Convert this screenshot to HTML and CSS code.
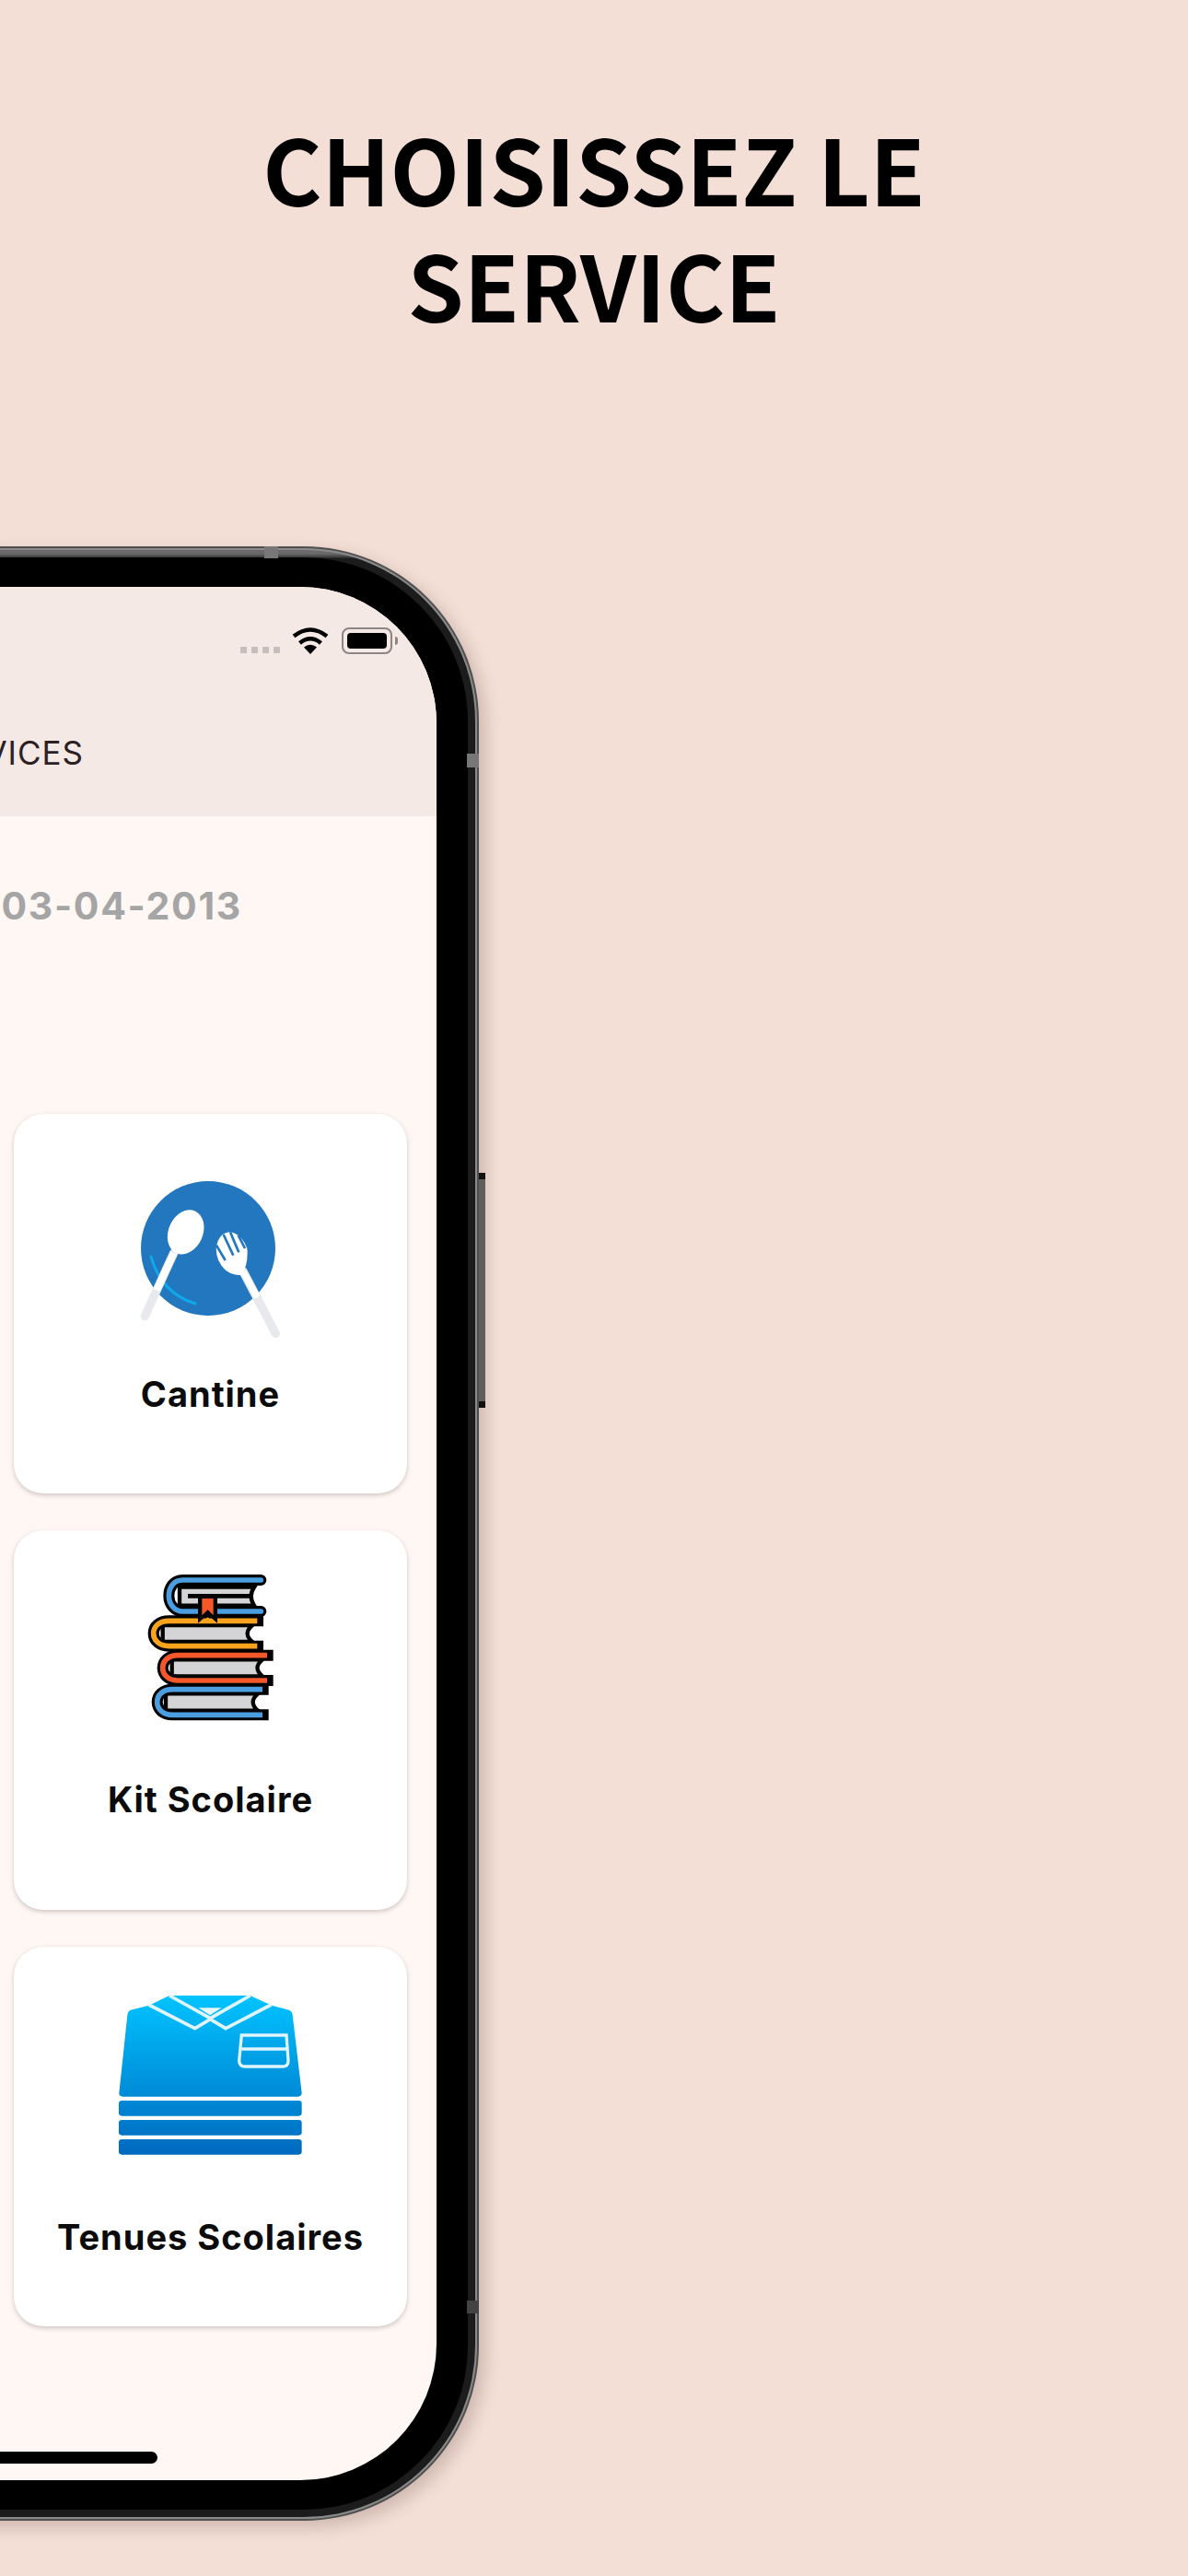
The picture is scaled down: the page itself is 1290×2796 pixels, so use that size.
FILE: index.html
```html
<!DOCTYPE html>
<html lang="fr">
<head>
<meta charset="utf-8">
<title>Choisissez le service</title>
<link rel="stylesheet" href="styles.css">
</head>
<body>
<main class="poster">
  <h1 class="title">CHOISISSEZ LE SERVICE</h1>
  <div class="phone">
    <span class="tab tab-top"></span>
    <span class="tab tab-right"></span>
    <span class="tab tab-right-low"></span>
    <span class="side-button"></span>
    <div class="ring-a"><div class="ring-b"><div class="bezel">
      <div class="screen">
        <header class="app-header">
          <div class="status">
            <span class="signal"><i></i><i></i><i></i><i></i></span>
            <svg class="wifi" viewBox="0 0 40 30" aria-hidden="true">
              <path d="M20 30 L13 22.500 Q20 17 27 22.500Z" fill="#000"/>
              <path d="M8.500 18 Q20 8.500 31.500 18" fill="none" stroke="#000" stroke-width="4.500"/>
              <path d="M2 10.500 Q20 -3.500 38 10.500" fill="none" stroke="#000" stroke-width="4.500"/>
            </svg>
            <span class="battery"><span class="battery-fill"></span></span>
            <span class="battery-cap"></span>
          </div>
          <div class="app-title">SERVICES</div>
        </header>
        <section class="content">
          <div class="date">03-04-2013</div>
          <div class="cards">
            <article class="card">
              <svg class="icon icon-cantine" viewBox="0 0 660 720" aria-hidden="true">
                <circle cx="318" cy="345" r="219" fill="#2277bf"/>
                <path d="M132 372 Q165 490 276 525" fill="none" stroke="#0fa8ea" stroke-width="9" stroke-linecap="round"/>
                <path d="M206 360 L112 566" stroke="#e8e9ec" stroke-width="28" stroke-linecap="round"/>
                <path d="M206 360 L150 482" stroke="#fff" stroke-width="22"/>
                <ellipse cx="245" cy="292" rx="56" ry="75" transform="rotate(24 245 292)" fill="#fff"/>
                <path d="M432 420 L538 622" stroke="#e8e9ec" stroke-width="28" stroke-linecap="round"/>
                <path d="M432 420 L478 505" stroke="#fff" stroke-width="20"/>
                <path d="M345 340 Q352 296 388 292 Q425 295 445 345 Q450 392 428 432 Q375 435 352 385 Q342 362 345 340Z" fill="#fff"/>
                <path d="M345 335 L374 384 M368 300 L400 368 M390 292 L418 358 M416 302 L438 345" stroke="#2277bf" stroke-width="8"/>
              </svg>
              <h2 class="label">Cantine</h2>
            </article>
            <article class="card">
              <svg class="icon icon-books" viewBox="0 0 570 600" aria-hidden="true">
                <path class="pages" d="M195 98 H438 Q418 127 438 158 H195Z"/>
                <path class="line" d="M222 127 H425"/>
                <path class="edge round" d="M460 75 H205 C175 75 160 100 160 127 C160 155 180 177 205 177 H460"/>
                <path class="cover blue round" d="M460 75 H205 C175 75 160 100 160 127 C160 155 180 177 205 177 H460"/>
                <path class="pages" d="M140 222 H432 Q400 249 432 276 H140Z"/>
                <path class="edge" d="M450 208 H160 C130 208 110 225 110 249 C110 272 130 290 160 290 H450"/>
                <path class="cover orange" d="M448 208 H160 C130 208 110 225 110 249 C110 272 130 290 160 290 H448"/>
                <path class="pages" d="M170 334 H465 Q432 361 465 388 H170Z"/>
                <path class="edge" d="M482 320 H190 C160 320 140 337 140 361 C140 385 160 402 190 402 H482"/>
                <path class="cover red" d="M480 320 H190 C160 320 140 337 140 361 C140 385 160 402 190 402 H480"/>
                <path class="pages" d="M150 445 H450 Q418 472 450 500 H150Z"/>
                <path class="edge" d="M467 431 H172 C142 431 122 448 122 472 C122 496 142 514 172 514 H467"/>
                <path class="cover blue" d="M465 431 H172 C142 431 122 448 122 472 C122 496 142 514 172 514 H465"/>
                <path d="M255 122 H318 V215 L287 188 L255 215Z" fill="#000"/>
                <path d="M268 135 H305 V190 L287 172 L268 190Z" fill="#f4572a"/>
                <path d="M275 207 L287 196 L299 207Z" fill="#fba31c"/>
              </svg>
              <h2 class="label">Kit Scolaire</h2>
            </article>
            <article class="card">
              <svg class="icon icon-shirt" viewBox="0 0 690 660" aria-hidden="true">
                <defs>
                  <linearGradient id="shirt" gradientUnits="userSpaceOnUse" x1="0" y1="80" x2="0" y2="600">
                    <stop offset="0" stop-color="#00c3ff"/>
                    <stop offset="1" stop-color="#0068bf"/>
                  </linearGradient>
                </defs>
                <path fill="url(#shirt)" d="M95 125 L155 110 L222 78 H485 L555 110 L612 125 Q622 130 623 142 L653 395 Q653 405 640 407 H70 Q57 405 58 395 L85 142 Q86 130 95 125Z"/>
                <path fill="#e7f7ff" d="M316 118 H392 L354 142Z"/>
                <path d="M155 108 L305 185 L355 155 L405 185 L553 108 M222 78 L355 152 L485 78" fill="none" stroke="#dff4ff" stroke-width="11"/>
                <path d="M457 207 H603 L609 290 Q609 309 590 309 H470 Q449 309 449 290Z M458 252 H602" fill="none" stroke="#dff4ff" stroke-width="10"/>
                <rect class="stripe" x="57" y="420" width="596" height="50" rx="10"/>
                <rect class="stripe" x="57" y="483" width="596" height="50" rx="10"/>
                <rect class="stripe" x="57" y="546" width="596" height="50" rx="10"/>
              </svg>
              <h2 class="label">Tenues Scolaires</h2>
            </article>
          </div>
          <div class="home-bar"></div>
        </section>
      </div>
    </div></div></div>
  </div>
</main>
</body>
</html>
```
FILE: styles.css
```css
html, body { margin: 0; padding: 0; }
body { width: 1290px; height: 2796px; overflow: hidden; background: #f4dfd6; }
.poster { width: 1290px; height: 2796px; display: flex; flex-direction: column; overflow: hidden; }
.title {
  margin: 0 auto;
  padding-top: 118px;
  width: 800px;
  height: 593px;
  box-sizing: border-box;
  text-align: center;
  font-family: "Noto Sans CJK SC", "Noto Sans", sans-serif;
  font-weight: 700;
  font-size: 98px;
  line-height: 126px;
  color: #000;
}
.phone {
  position: relative;
  flex: none;
  margin-left: -200px;
  width: 720px;
  height: 2143px;
  box-sizing: border-box;
  padding: 2px;
  border-radius: 190px;
  background: #4f4f4f;
  box-shadow: 7px 7px 18px rgba(70, 40, 30, .22);
}
.ring-a { height: 100%; box-sizing: border-box; padding: 2px; border-radius: 188px; background: #8a8a8a; }
.ring-b {
  height: 100%;
  box-sizing: border-box;
  padding: 8px;
  border-radius: 186px;
  background: linear-gradient(#6a6a6a 0, #6a6a6a 4px, #3a3a3a 8px, #1c1c1c 9px);
}
.bezel { height: 100%; box-sizing: border-box; padding: 32px 34px; border-radius: 178px; background: #000; }
.screen {
  height: 100%;
  display: flex;
  flex-direction: column;
  border-radius: 148px;
  overflow: hidden;
  background: #fef7f4;
  font-family: Inter, "Liberation Sans", sans-serif;
}
.tab { position: absolute; background: #777; }
.tab-top { right: 218px; top: 0; width: 15px; height: 13px; }
.tab-right { right: 0; top: 225px; width: 13px; height: 15px; }
.tab-right-low { right: 0; top: 1904px; width: 13px; height: 14px; background: #444; }
.side-button {
  position: absolute;
  right: -7px;
  top: 680px;
  width: 7px;
  height: 255px;
  background: #5f5f5f;
  border-top: 7px solid #111;
  border-bottom: 7px solid #111;
  box-sizing: border-box;
}
.app-header { height: 249px; flex: none; background: #f5e9e6; display: flex; flex-direction: column; align-items: flex-end; }
.status { display: flex; align-items: flex-end; margin-top: 43px; padding-right: 42px; height: 30px; }
.signal { display: flex; gap: 5px; margin: 0 13px 1px 0; }
.signal i { display: block; width: 7px; height: 7px; border-radius: 1px; background: #c6bdbd; }
.wifi { width: 40px; height: 30px; display: block; margin-right: 14px; }
.battery {
  width: 55px; height: 29px; box-sizing: border-box; padding: 4px;
  border: 2px solid #8d8484; border-radius: 8px; display: block;
}
.battery-fill { display: block; height: 100%; background: #000; border-radius: 4px; }
.battery-cap { width: 3px; height: 9px; margin: 0 0 10px 3px; background: #8d8484; border-radius: 0 3px 3px 0; }
.app-title {
  margin-top: 86px;
  padding-right: 383px;
  font-size: 35px;
  line-height: 42px;
  font-weight: 400;
  letter-spacing: 1px;
  color: #2b2024;
  white-space: nowrap;
}
.content { flex: 1; display: flex; flex-direction: column; align-items: flex-end; padding-right: 32px; position: relative; }
.date {
  margin-top: 75px;
  padding-right: 179px;
  font-size: 41px;
  line-height: 44px;
  font-weight: 700;
  letter-spacing: 1.700px;
  color: #a5a5a5;
  white-space: nowrap;
}
.cards { margin-top: 204px; display: flex; flex-direction: column; gap: 40px; }
.card {
  width: 427px;
  height: 412px;
  border-radius: 32px;
  background: #fff;
  box-shadow: 0 2px 5px rgba(90, 70, 60, .28);
  display: flex;
  flex-direction: column;
  align-items: center;
}
.icon { display: block; flex: none; }
.icon-cantine { width: 220px; height: 240px; margin-top: 31px; margin-left: 3px; }
.icon-books { width: 190px; height: 200px; margin-top: 29px; margin-right: 7px; }
.icon-shirt { width: 230px; height: 220px; margin-top: 27px; margin-right: 7px; }
.label {
  margin: 0;
  font-size: 38px;
  line-height: 46px;
  font-weight: 700;
  letter-spacing: 1px;
  color: #0b0b0b;
  white-space: nowrap;
}
.icon-cantine + .label { margin-top: 10px; }
.icon-books + .label { margin-top: 40px; }
.icon-shirt + .label { margin-top: 45px; }
.pages { fill: #d4d4d6; stroke: #000; stroke-width: 13; }
.line { fill: none; stroke: #000; stroke-width: 14; }
.edge { fill: none; stroke: #000; stroke-width: 36; stroke-linecap: square; }
.cover { fill: none; stroke-width: 17; }
.round { stroke-linecap: round; }
.blue { stroke: #4a9ee0; }
.orange { stroke: #fba31c; }
.red { stroke: #f4572a; }
.stripe { fill: url(#shirt); }
.home-bar {
  position: absolute;
  right: 303px;
  bottom: 18px;
  width: 400px;
  height: 13px;
  border-radius: 7px;
  background: #000;
}
```
